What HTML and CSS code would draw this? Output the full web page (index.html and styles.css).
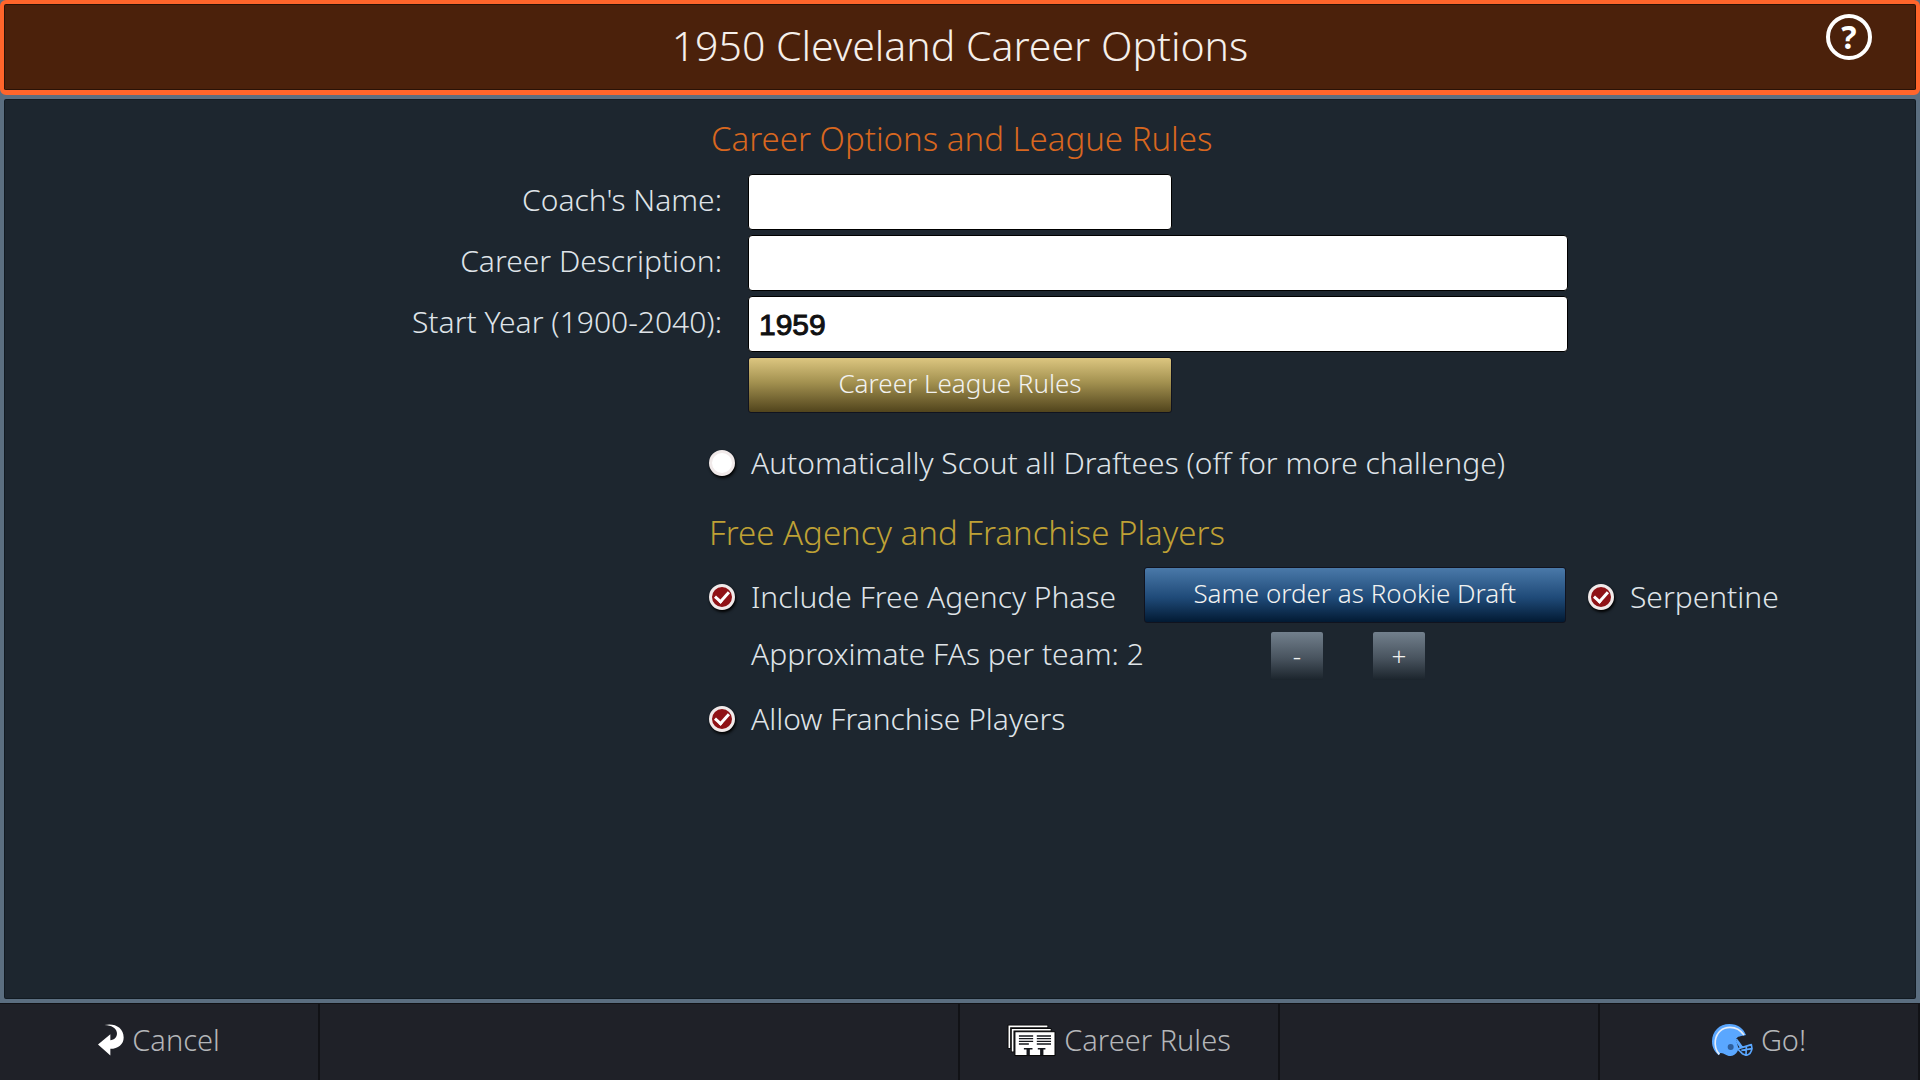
FILE: index.html
```html
<!DOCTYPE html>
<html lang="en">
<head>
<meta charset="utf-8">
<meta name="viewport" content="width=device-width, initial-scale=1">
<title>1950 Cleveland Career Options</title>
<link rel="stylesheet" href="styles.css">
</head>
<body>
<header class="titlebar">
  <h1 class="title">1950 Cleveland Career Options</h1>
  <button class="help" type="button" aria-label="Help">?</button>
</header>
<main class="panel">
  <h2 class="section section-league">Career Options and League Rules</h2>
  <div class="fields">
    <label class="field-label" for="coach">Coach's Name:</label>
    <input class="textbox textbox-short" id="coach" type="text">
    <label class="field-label" for="description">Career Description:</label>
    <input class="textbox" id="description" type="text">
    <label class="field-label" for="year">Start Year (1900-2040):</label>
    <input class="textbox" id="year" type="text" value="1959">
    <button class="btn btn-gold" type="button">Career League Rules</button>
  </div>
  <div class="options">
    <label class="check"><input class="tick" type="checkbox">Automatically Scout all Draftees (off for more challenge)</label>
    <h2 class="section section-agency">Free Agency and Franchise Players</h2>
    <div class="agency">
      <label class="check"><input class="tick" type="checkbox" checked>Include Free Agency Phase</label>
      <button class="btn btn-blue" type="button">Same order as Rookie Draft</button>
      <label class="check"><input class="tick" type="checkbox" checked>Serpentine</label>
    </div>
    <div class="stepper">
      <span class="stepper-label">Approximate FAs per team: 2</span>
      <button class="btn step" type="button" aria-label="Fewer">-</button>
      <button class="btn step" type="button" aria-label="More">+</button>
    </div>
    <label class="check"><input class="tick" type="checkbox" checked>Allow Franchise Players</label>
  </div>
</main>
<footer class="toolbar">
  <button class="tool" type="button">
    <svg width="26" height="32" viewBox="300 135 80 96" aria-hidden="true"><path fill="#fff" d="M300 197 338 165V184C352 182 360 172 358 160C356 146 342 138 320 137C350 130 379 144 379 175C379 196 362 210 338 210V231Z"/></svg>
    Cancel
  </button>
  <div class="tool"></div>
  <button class="tool" type="button">
    <svg width="49" height="33" viewBox="198 135 148 99" aria-hidden="true">
      <path fill="none" stroke="#000" stroke-width="10" d="M205 209V142H322"/>
      <path fill="none" stroke="#fff" stroke-width="5" d="M205 207V142H320"/>
      <path fill="none" stroke="#000" stroke-width="9" d="M215 220V152H332"/>
      <path fill="none" stroke="#fff" stroke-width="5" d="M215 218V152H330"/>
      <path fill="#fff" stroke="#000" stroke-width="3" d="M222 158H343V230H222Z"/>
      <path fill="none" stroke="#15171c" stroke-width="4" d="M234 171H277M234 179H277M234 187H277M234 195H264M288 171H331M288 179H331M288 187H331M288 195H331"/>
      <path fill="#15171c" d="M249 207H275V212H267V229H257V212H249ZM291 207H314V212H308V229H298V212H291Z"/>
    </svg>
    Career Rules
  </button>
  <div class="tool"></div>
  <button class="tool" type="button">
    <svg width="41" height="32" viewBox="405 135 123 96" aria-hidden="true">
      <path fill="#5aa7ff" d="M425 229C412 218 405 205 405 187C405 157 427 135 457 135C482 135 500 149 507 168C493 172 480 171 477 181C475 188 488 203 482 216C477 226 468 231 460 231C446 231 442 221 430 222Z"/>
      <path fill="none" stroke="#e4ecf8" stroke-width="5" d="M427 226C417 215 413 200 415 184C419 160 436 145 459 145C478 145 492 155 501 168"/>
      <circle cx="461" cy="204" r="9" fill="#2f5f9c"/>
      <path fill="none" stroke="#5aa7ff" stroke-width="5" stroke-linejoin="round" d="M477 184 491 206M477 211 523 197 525 209C523 220 515 228 507 229L496 224 482 210M493 214 525 209M508 203 507 228M478 180C482 185 487 193 496 205"/>
    </svg>
    Go!
  </button>
</footer>
</body>
</html>
```
FILE: styles.css
```css
* { box-sizing: border-box; }

body {
  margin: 0;
  min-height: 100vh;
  display: flex;
  flex-direction: column;
  background: #5b6e80;
  color: #dfe3e8;
  font-family: "Noto Sans", "Open Sans", sans-serif;
  font-size: 30px;
  font-weight: 300;
  line-height: 40px;
}

button, input { font: inherit; color: inherit; }
button { cursor: pointer; }

.titlebar {
  display: grid;
  grid-template-columns: 1fr auto 1fr;
  min-height: 95px;
  padding: 8px 44px 0;
  border: 4px solid #ff652b;
  border-bottom-width: 5px;
  border-radius: 6px;
  background: #4b210b;
  box-shadow: inset 0 0 0 1px #2a1206;
}

.title {
  grid-column: 2;
  margin: 0;
  color: #f5efea;
  font-size: 41px;
  font-weight: 300;
  line-height: 66px;
}

.help {
  justify-self: end;
  width: 46px;
  height: 46px;
  margin-top: 2px;
  padding: 0;
  border: 4px solid #fff;
  border-radius: 50%;
  background: none;
  color: #fff;
  font-size: 32px;
  font-weight: 700;
  line-height: 36px;
}

.panel {
  flex: 1;
  padding: 18px 0;
  border: 4px solid #5b6e80;
  border-radius: 6px;
  background: #1d262f;
  box-shadow: inset 0 0 0 1px #111a22;
}

.section {
  margin: 0;
  font-size: 33px;
  font-weight: 300;
  line-height: 44px;
}

.section-league {
  padding-left: calc(37.5% - 10px);
  color: #d8671f;
}

.section-agency {
  margin: 28px 0 12px;
  color: #bfa135;
}

.fields {
  display: grid;
  grid-template-columns: calc(37.5% + 1px) 1fr;
  column-gap: 26px;
  row-gap: 5px;
  align-items: center;
  margin-top: 13px;
}

.field-label {
  padding-bottom: 4px;
  text-align: right;
}

.textbox {
  width: 70.2%;
  height: 56px;
  padding: 2px 10px 0;
  border: 1px solid #000;
  border-radius: 4px;
  background: #fff;
  color: #111;
  font-family: "Liberation Sans", Arial, sans-serif;
  font-size: 30px;
  font-weight: 400;
  -webkit-text-stroke: 1px #111;
}

.textbox-short, .btn-gold { width: 36%; min-width: 424px; }

.btn {
  height: 56px;
  padding: 0 8px 4px;
  border: 1px solid #10131f;
  border-radius: 3px;
  color: #f2f2f0;
  font-size: 26px;
  line-height: 32px;
}

.btn-gold {
  grid-column: 2;
  background: linear-gradient(#dcc680, #a39150 45%, #51441c);
}

.btn-blue { background: linear-gradient(#4a79a9, #1f4a78 55%, #021a33); }

.options {
  display: flex;
  flex-direction: column;
  align-items: stretch;
  margin-top: 30px;
  padding-left: calc(37.5% - 12px);
}

.check {
  display: flex;
  align-items: center;
  gap: 16px;
  white-space: nowrap;
}

.tick {
  appearance: none;
  flex: none;
  display: grid;
  place-items: center;
  width: 26px;
  height: 26px;
  margin: 0;
  border: 3px solid #f1eaea;
  border-radius: 50%;
  background: #fff;
  box-shadow: 1px 2px 3px #000;
}

.tick:checked { background: #8f1216; }

.tick:checked::before {
  content: "";
  width: 11px;
  height: 6px;
  margin-bottom: 3px;
  border: solid #fff;
  border-width: 0 0 3px 3px;
  transform: rotate(-48deg);
}

.agency {
  display: grid;
  grid-template-columns: 36% 35% auto;
  justify-content: start;
}

.agency .check { padding-top: 4px; }
.agency .check:last-child { margin-left: 22px; }

.stepper {
  display: flex;
  align-items: center;
  gap: 48px;
  margin: 8px 0 18px;
}

.stepper-label {
  width: 43%;
  margin: 0 -48px 4px 42px;
  white-space: nowrap;
}

.step {
  width: 54px;
  height: 50px;
  padding: 0;
  border-color: #1d262f;
  background: linear-gradient(#72808d, #48535e 55%, #1b242c);
}

.toolbar {
  display: grid;
  grid-template-columns: 1fr 2fr 1fr 1fr 1fr;
  min-height: 77px;
  background: #1f2128;
}

.tool {
  display: flex;
  align-items: center;
  justify-content: center;
  gap: 8px;
  padding: 0 0 4px;
  border: solid #111216;
  border-width: 1px 2px 0 0;
  background: none;
  color: #b4b6b9;
  font-size: 29px;
}
```
